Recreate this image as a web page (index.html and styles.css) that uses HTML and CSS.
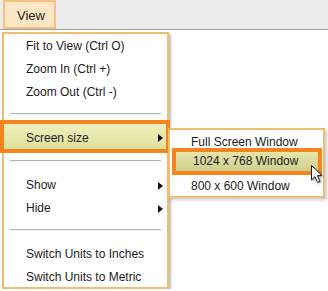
FILE: index.html
```html
<!DOCTYPE html>
<html lang="en">
<head>
    <meta charset="UTF-8">
    <title>View menu</title>
    <link rel="stylesheet" href="styles.css">
</head>
<body>
<div class="menubar">
    <div class="menubar-item">View</div>
</div>
<div class="menu">
    <div class="menu-item">Fit to View (Ctrl O)</div>
    <div class="menu-item">Zoom In (Ctrl +)</div>
    <div class="menu-item">Zoom Out (Ctrl -)</div>
    <div class="menu-sep sep-1"></div>
    <div class="menu-item active">
        <span>Screen size</span><span class="arrow"></span>
        <div class="submenu">
            <div class="sub-item first">Full Screen Window</div>
            <div class="sub-item active">1024 x 768 Window</div>
            <div class="sub-item last">800 x 600 Window</div>
            <svg class="cursor" width="13" height="20" viewBox="0 0 13 20">
                <path d="M1.5 1.5 L1.5 16 L5 12.6 L7.6 18.4 L10 17.3 L7.4 11.6 L12 11.6 Z" fill="#fff" stroke="#222" stroke-width="1" stroke-linejoin="round"/>
            </svg>
        </div>
    </div>
    <div class="menu-sep sep-2"></div>
    <div class="menu-item show"><span>Show</span><span class="arrow"></span></div>
    <div class="menu-item"><span>Hide</span><span class="arrow"></span></div>
    <div class="menu-sep sep-3"></div>
    <div class="menu-item">Switch Units to Inches</div>
    <div class="menu-item last">Switch Units to Metric</div>
</div>
</body>
</html>
```

FILE: styles.css
```css
* {
    box-sizing: border-box;
}

body {
    margin: 0;
    font-family: "Liberation Sans", Arial, sans-serif;
    font-size: 12px;
    color: #1c1c1c;
    background: #fff;
}

.menubar {
    height: 30px;
    padding-left: 3px;
    background: #ebebeb;
    border-bottom: 1px solid #9c9c9c;
    display: flex;
}

.menubar-item {
    width: 53px;
    height: 29px;
    line-height: 27px;
    padding-left: 12px;
    font-size: 13px;
    background: #fde6c5;
    border: 2px solid #f3c27e;
}

.menu {
    width: 167px;
    margin: 2px 0 0 2px;
    padding: 1px 0 0;
    border: 2px solid #f0bd72;
    background: #fff;
    box-shadow: 2px 2px 2px rgba(0, 0, 0, 0.25);
}

.menu-item {
    height: 23px;
    line-height: 23px;
    padding: 0 4px 0 22px;
    display: flex;
    justify-content: space-between;
    align-items: center;
}

.menu-item.last {
    height: 21px;
    line-height: 22px;
    align-items: flex-start;
}

.arrow {
    width: 0;
    height: 0;
    border-left: 5px solid #111;
    border-top: 4.5px solid transparent;
    border-bottom: 4.5px solid transparent;
}

.menu-sep {
    margin: 9px 6px 5px;
    border-top: 1px solid #b4b4b4;
    border-bottom: 1px solid #f4f4f4;
}

.sep-2 {
    margin-top: 7px;
    margin-bottom: 12px;
}

.sep-3 {
    margin-top: 9px;
    margin-bottom: 12px;
}

.menu-item.active {
    position: relative;
    height: 33px;
    margin: 0 -3px 0 -4px;
    padding: 3px 3px 0 22px;
    border: 4px solid #f7841c;
    background: linear-gradient(#efefbd, #e0e09c);
}

.submenu {
    position: absolute;
    left: 164px;
    top: 4px;
    width: 157px;
    height: 70px;
    padding-top: 3px;
    border: 2px solid #f0bd72;
    background: #fff;
    box-shadow: 2px 2px 3px rgba(0, 0, 0, 0.2);
}

.sub-item {
    height: 18px;
    line-height: 18px;
    padding-left: 21px;
}

.sub-item.active {
    height: 27px;
    line-height: 19px;
    margin: -3px 1px 0 2px;
    padding-left: 17px;
    border: 4px solid #f7841c;
    background: linear-gradient(#e6e6ad, #cfcf8c);
}

.sub-item.last {
    margin-top: 2px;
}

.cursor {
    position: absolute;
    left: 140px;
    top: 34px;
    filter: drop-shadow(1px 1px 1px rgba(0, 0, 0, 0.4));
}
```
